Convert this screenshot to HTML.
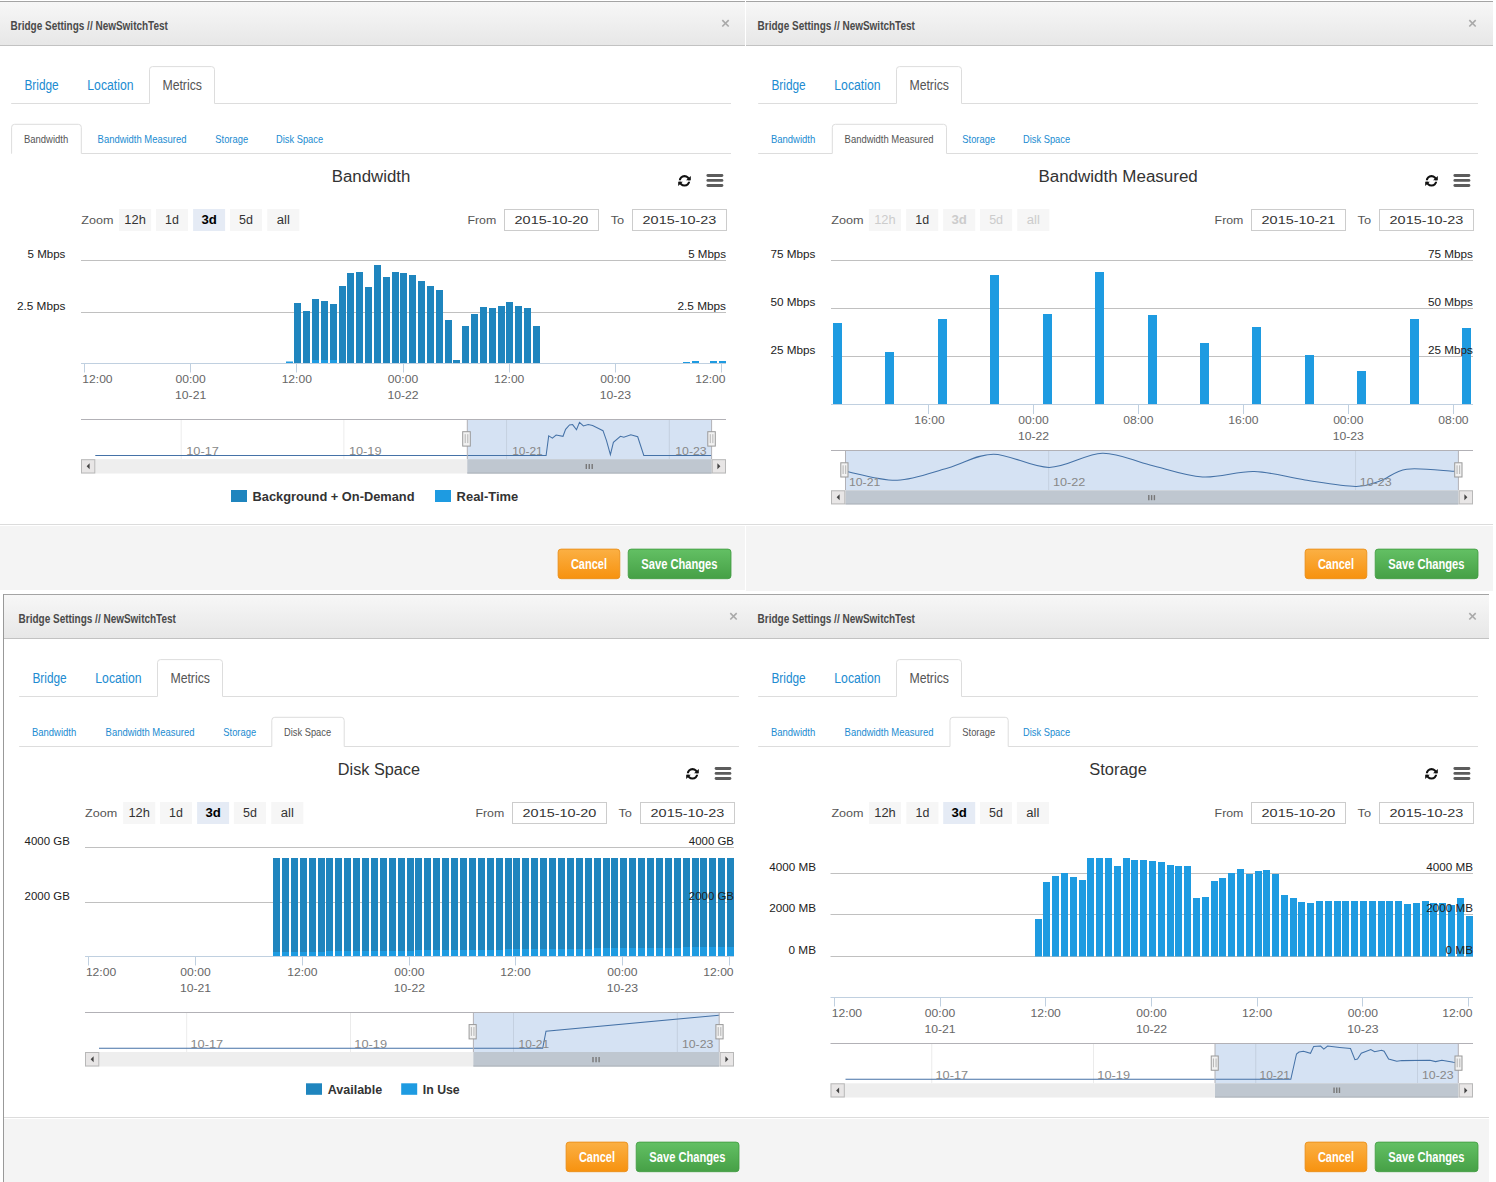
<!DOCTYPE html><html><head><meta charset="utf-8"><style>html,body{margin:0;padding:0;background:#fff;overflow:hidden}svg{display:block}text{font-family:"Liberation Sans",sans-serif}</style></head><body>
<svg width="1496" height="1182" viewBox="0 0 1496 1182">
<defs>
<linearGradient id="hdr" x1="0" y1="0" x2="0" y2="1"><stop offset="0" stop-color="#f7f7f7"/><stop offset="1" stop-color="#e7e7e7"/></linearGradient>
<linearGradient id="orng" x1="0" y1="0" x2="0" y2="1"><stop offset="0" stop-color="#fbb044"/><stop offset="1" stop-color="#f7920f"/></linearGradient>
<linearGradient id="grn" x1="0" y1="0" x2="0" y2="1"><stop offset="0" stop-color="#63c064"/><stop offset="1" stop-color="#46a046"/></linearGradient>
</defs>
<rect x="0.00" y="0.00" width="1496.00" height="1182.00" fill="#ffffff"/>
<g transform="translate(0,0)">
<rect x="0.00" y="1.00" width="745.00" height="589.00" fill="#ffffff"/>
<rect x="0.00" y="1.50" width="745.00" height="44.00" fill="url(#hdr)"/>
<line x1="0.00" y1="1.50" x2="745.00" y2="1.50" stroke="#a4a4a4" stroke-width="1"/>
<line x1="0.00" y1="45.50" x2="745.00" y2="45.50" stroke="#c2c2c2" stroke-width="1"/>
<text x="10.6" y="29.8" font-size="12" fill="#4a4a4a" font-weight="bold" textLength="157.3" lengthAdjust="spacingAndGlyphs">Bridge Settings // NewSwitchTest</text>
<path d="M722.3,20.1 L728.7,26.5 M728.7,20.1 L722.3,26.5" stroke="#a9a9a9" stroke-width="1.6"/>
<path d="M11.2,103.5 H149.5 M214.5,103.5 H731" stroke="#dddddd" stroke-width="1"/>
<path d="M149.5,103.5 V69.6 Q149.5,66.6 152.5,66.6 H211.5 Q214.5,66.6 214.5,69.6 V103.5" fill="#fff" stroke="#dddddd" stroke-width="1"/>
<text x="24.4" y="89.7" font-size="14" fill="#218bd1" textLength="34.3" lengthAdjust="spacingAndGlyphs">Bridge</text>
<text x="87.3" y="89.7" font-size="14" fill="#218bd1" textLength="46.2" lengthAdjust="spacingAndGlyphs">Location</text>
<text x="162.4" y="89.7" font-size="14" fill="#555555" textLength="39.6" lengthAdjust="spacingAndGlyphs">Metrics</text>
<path d="M11.2,153.5 H11.6 M81.3,153.5 H731" stroke="#dddddd" stroke-width="1"/>
<path d="M11.6,153.5 V127.3 Q11.6,124.3 14.6,124.3 H78.3 Q81.3,124.3 81.3,127.3 V153.5" fill="#fff" stroke="#dddddd" stroke-width="1"/>
<text x="23.9" y="142.7" font-size="11" fill="#555555" textLength="44.3" lengthAdjust="spacingAndGlyphs">Bandwidth</text>
<text x="97.6" y="142.7" font-size="11" fill="#218bd1" textLength="88.8" lengthAdjust="spacingAndGlyphs">Bandwidth Measured</text>
<text x="215.3" y="142.7" font-size="11" fill="#218bd1" textLength="32.8" lengthAdjust="spacingAndGlyphs">Storage</text>
<text x="276.1" y="142.7" font-size="11" fill="#218bd1" textLength="47.0" lengthAdjust="spacingAndGlyphs">Disk Space</text>
<line x1="0.00" y1="524.50" x2="745.00" y2="524.50" stroke="#dcdcdc" stroke-width="1"/>
<rect x="0.00" y="526.00" width="745.00" height="64.00" fill="#f4f4f4"/>
<rect x="558.10" y="549.10" width="61.70" height="29.60" fill="url(#orng)" stroke="#e88a12" stroke-width="0.8" rx="3"/>
<text x="570.9" y="568.7" font-size="14.5" fill="#ffffff" font-weight="bold" textLength="36.1" lengthAdjust="spacingAndGlyphs">Cancel</text>
<rect x="628.20" y="549.10" width="102.80" height="29.60" fill="url(#grn)" stroke="#3f9a3f" stroke-width="0.8" rx="3"/>
<text x="641.3" y="568.7" font-size="14.5" fill="#ffffff" font-weight="bold" textLength="76.2" lengthAdjust="spacingAndGlyphs">Save Changes</text>
</g>
<g transform="translate(747,0)">
<rect x="-1.00" y="1.00" width="747.00" height="590.00" fill="#ffffff"/>
<rect x="-1.00" y="1.50" width="747.00" height="44.00" fill="url(#hdr)"/>
<line x1="-1.00" y1="1.50" x2="746.00" y2="1.50" stroke="#a4a4a4" stroke-width="1"/>
<line x1="-1.00" y1="45.50" x2="746.00" y2="45.50" stroke="#c2c2c2" stroke-width="1"/>
<text x="10.6" y="29.8" font-size="12" fill="#4a4a4a" font-weight="bold" textLength="157.3" lengthAdjust="spacingAndGlyphs">Bridge Settings // NewSwitchTest</text>
<path d="M722.3,20.1 L728.7,26.5 M728.7,20.1 L722.3,26.5" stroke="#a9a9a9" stroke-width="1.6"/>
<path d="M11.2,103.5 H149.5 M214.5,103.5 H731" stroke="#dddddd" stroke-width="1"/>
<path d="M149.5,103.5 V69.6 Q149.5,66.6 152.5,66.6 H211.5 Q214.5,66.6 214.5,69.6 V103.5" fill="#fff" stroke="#dddddd" stroke-width="1"/>
<text x="24.4" y="89.7" font-size="14" fill="#218bd1" textLength="34.3" lengthAdjust="spacingAndGlyphs">Bridge</text>
<text x="87.3" y="89.7" font-size="14" fill="#218bd1" textLength="46.2" lengthAdjust="spacingAndGlyphs">Location</text>
<text x="162.4" y="89.7" font-size="14" fill="#555555" textLength="39.6" lengthAdjust="spacingAndGlyphs">Metrics</text>
<path d="M11.2,153.5 H85.3 M199.5,153.5 H731" stroke="#dddddd" stroke-width="1"/>
<path d="M85.3,153.5 V127.3 Q85.3,124.3 88.3,124.3 H196.5 Q199.5,124.3 199.5,127.3 V153.5" fill="#fff" stroke="#dddddd" stroke-width="1"/>
<text x="23.9" y="142.7" font-size="11" fill="#218bd1" textLength="44.3" lengthAdjust="spacingAndGlyphs">Bandwidth</text>
<text x="97.6" y="142.7" font-size="11" fill="#555555" textLength="88.8" lengthAdjust="spacingAndGlyphs">Bandwidth Measured</text>
<text x="215.3" y="142.7" font-size="11" fill="#218bd1" textLength="32.8" lengthAdjust="spacingAndGlyphs">Storage</text>
<text x="276.1" y="142.7" font-size="11" fill="#218bd1" textLength="47.0" lengthAdjust="spacingAndGlyphs">Disk Space</text>
<line x1="-1.00" y1="524.50" x2="746.00" y2="524.50" stroke="#dcdcdc" stroke-width="1"/>
<rect x="-1.00" y="526.00" width="747.00" height="65.00" fill="#f4f4f4"/>
<rect x="558.10" y="549.10" width="61.70" height="29.60" fill="url(#orng)" stroke="#e88a12" stroke-width="0.8" rx="3"/>
<text x="570.9" y="568.7" font-size="14.5" fill="#ffffff" font-weight="bold" textLength="36.1" lengthAdjust="spacingAndGlyphs">Cancel</text>
<rect x="628.20" y="549.10" width="102.80" height="29.60" fill="url(#grn)" stroke="#3f9a3f" stroke-width="0.8" rx="3"/>
<text x="641.3" y="568.7" font-size="14.5" fill="#ffffff" font-weight="bold" textLength="76.2" lengthAdjust="spacingAndGlyphs">Save Changes</text>
</g>
<g transform="translate(8,593)">
<rect x="-4.00" y="1.00" width="742.00" height="588.00" fill="#ffffff"/>
<rect x="-4.00" y="1.50" width="742.00" height="44.00" fill="url(#hdr)"/>
<line x1="-4.00" y1="1.50" x2="738.00" y2="1.50" stroke="#a4a4a4" stroke-width="1"/>
<line x1="-4.00" y1="45.50" x2="738.00" y2="45.50" stroke="#c2c2c2" stroke-width="1"/>
<text x="10.6" y="29.8" font-size="12" fill="#4a4a4a" font-weight="bold" textLength="157.3" lengthAdjust="spacingAndGlyphs">Bridge Settings // NewSwitchTest</text>
<path d="M722.3,20.1 L728.7,26.5 M728.7,20.1 L722.3,26.5" stroke="#a9a9a9" stroke-width="1.6"/>
<path d="M11.2,103.5 H149.5 M214.5,103.5 H731" stroke="#dddddd" stroke-width="1"/>
<path d="M149.5,103.5 V69.6 Q149.5,66.6 152.5,66.6 H211.5 Q214.5,66.6 214.5,69.6 V103.5" fill="#fff" stroke="#dddddd" stroke-width="1"/>
<text x="24.4" y="89.7" font-size="14" fill="#218bd1" textLength="34.3" lengthAdjust="spacingAndGlyphs">Bridge</text>
<text x="87.3" y="89.7" font-size="14" fill="#218bd1" textLength="46.2" lengthAdjust="spacingAndGlyphs">Location</text>
<text x="162.4" y="89.7" font-size="14" fill="#555555" textLength="39.6" lengthAdjust="spacingAndGlyphs">Metrics</text>
<path d="M11.2,153.5 H263.8 M336.2,153.5 H731" stroke="#dddddd" stroke-width="1"/>
<path d="M263.8,153.5 V127.3 Q263.8,124.3 266.8,124.3 H333.2 Q336.2,124.3 336.2,127.3 V153.5" fill="#fff" stroke="#dddddd" stroke-width="1"/>
<text x="23.9" y="142.7" font-size="11" fill="#218bd1" textLength="44.3" lengthAdjust="spacingAndGlyphs">Bandwidth</text>
<text x="97.6" y="142.7" font-size="11" fill="#218bd1" textLength="88.8" lengthAdjust="spacingAndGlyphs">Bandwidth Measured</text>
<text x="215.3" y="142.7" font-size="11" fill="#218bd1" textLength="32.8" lengthAdjust="spacingAndGlyphs">Storage</text>
<text x="276.1" y="142.7" font-size="11" fill="#555555" textLength="47.0" lengthAdjust="spacingAndGlyphs">Disk Space</text>
<line x1="-4.00" y1="524.50" x2="738.00" y2="524.50" stroke="#dcdcdc" stroke-width="1"/>
<rect x="-4.00" y="526.00" width="742.00" height="63.00" fill="#f4f4f4"/>
<rect x="558.10" y="549.10" width="61.70" height="29.60" fill="url(#orng)" stroke="#e88a12" stroke-width="0.8" rx="3"/>
<text x="570.9" y="568.7" font-size="14.5" fill="#ffffff" font-weight="bold" textLength="36.1" lengthAdjust="spacingAndGlyphs">Cancel</text>
<rect x="628.20" y="549.10" width="102.80" height="29.60" fill="url(#grn)" stroke="#3f9a3f" stroke-width="0.8" rx="3"/>
<text x="641.3" y="568.7" font-size="14.5" fill="#ffffff" font-weight="bold" textLength="76.2" lengthAdjust="spacingAndGlyphs">Save Changes</text>
</g>
<line x1="3.50" y1="594.00" x2="3.50" y2="1182.00" stroke="#999999" stroke-width="1"/>
<g transform="translate(747,593)">
<rect x="-1.00" y="1.00" width="743.00" height="588.00" fill="#ffffff"/>
<rect x="-1.00" y="1.50" width="743.00" height="44.00" fill="url(#hdr)"/>
<line x1="-1.00" y1="1.50" x2="742.00" y2="1.50" stroke="#a4a4a4" stroke-width="1"/>
<line x1="-1.00" y1="45.50" x2="742.00" y2="45.50" stroke="#c2c2c2" stroke-width="1"/>
<text x="10.6" y="29.8" font-size="12" fill="#4a4a4a" font-weight="bold" textLength="157.3" lengthAdjust="spacingAndGlyphs">Bridge Settings // NewSwitchTest</text>
<path d="M722.3,20.1 L728.7,26.5 M728.7,20.1 L722.3,26.5" stroke="#a9a9a9" stroke-width="1.6"/>
<path d="M11.2,103.5 H149.5 M214.5,103.5 H731" stroke="#dddddd" stroke-width="1"/>
<path d="M149.5,103.5 V69.6 Q149.5,66.6 152.5,66.6 H211.5 Q214.5,66.6 214.5,69.6 V103.5" fill="#fff" stroke="#dddddd" stroke-width="1"/>
<text x="24.4" y="89.7" font-size="14" fill="#218bd1" textLength="34.3" lengthAdjust="spacingAndGlyphs">Bridge</text>
<text x="87.3" y="89.7" font-size="14" fill="#218bd1" textLength="46.2" lengthAdjust="spacingAndGlyphs">Location</text>
<text x="162.4" y="89.7" font-size="14" fill="#555555" textLength="39.6" lengthAdjust="spacingAndGlyphs">Metrics</text>
<path d="M11.2,153.5 H203.0 M261.2,153.5 H731" stroke="#dddddd" stroke-width="1"/>
<path d="M203.0,153.5 V127.3 Q203.0,124.3 206.0,124.3 H258.2 Q261.2,124.3 261.2,127.3 V153.5" fill="#fff" stroke="#dddddd" stroke-width="1"/>
<text x="23.9" y="142.7" font-size="11" fill="#218bd1" textLength="44.3" lengthAdjust="spacingAndGlyphs">Bandwidth</text>
<text x="97.6" y="142.7" font-size="11" fill="#218bd1" textLength="88.8" lengthAdjust="spacingAndGlyphs">Bandwidth Measured</text>
<text x="215.3" y="142.7" font-size="11" fill="#555555" textLength="32.8" lengthAdjust="spacingAndGlyphs">Storage</text>
<text x="276.1" y="142.7" font-size="11" fill="#218bd1" textLength="47.0" lengthAdjust="spacingAndGlyphs">Disk Space</text>
<line x1="-1.00" y1="524.50" x2="742.00" y2="524.50" stroke="#dcdcdc" stroke-width="1"/>
<rect x="-1.00" y="526.00" width="743.00" height="63.00" fill="#f4f4f4"/>
<rect x="558.10" y="549.10" width="61.70" height="29.60" fill="url(#orng)" stroke="#e88a12" stroke-width="0.8" rx="3"/>
<text x="570.9" y="568.7" font-size="14.5" fill="#ffffff" font-weight="bold" textLength="36.1" lengthAdjust="spacingAndGlyphs">Cancel</text>
<rect x="628.20" y="549.10" width="102.80" height="29.60" fill="url(#grn)" stroke="#3f9a3f" stroke-width="0.8" rx="3"/>
<text x="641.3" y="568.7" font-size="14.5" fill="#ffffff" font-weight="bold" textLength="76.2" lengthAdjust="spacingAndGlyphs">Save Changes</text>
</g>
<line x1="0.00" y1="524.50" x2="1493.00" y2="524.50" stroke="#dcdcdc" stroke-width="1"/>
<text x="371.0" y="181.7" font-size="16" fill="#333333" text-anchor="middle" textLength="78.5" lengthAdjust="spacingAndGlyphs">Bandwidth</text>
<clipPath id="rt1"><rect x="676.5" y="172.85" width="16" height="7.35"/></clipPath>
<clipPath id="rb1"><rect x="676.5" y="181.70" width="16" height="8"/></clipPath>
<path d="M678.75,180.85 A5.75,5.75 0 1 1 690.25,180.85 A5.75,5.75 0 1 1 678.75,180.85 Z M680.95,180.85 A3.55,3.55 0 1 0 688.05,180.85 A3.55,3.55 0 1 0 680.95,180.85 Z" fill="#111" fill-rule="evenodd" clip-path="url(#rt1)"/>
<path d="M678.75,180.85 A5.75,5.75 0 1 1 690.25,180.85 A5.75,5.75 0 1 1 678.75,180.85 Z M680.95,180.85 A3.55,3.55 0 1 0 688.05,180.85 A3.55,3.55 0 1 0 680.95,180.85 Z" fill="#111" fill-rule="evenodd" clip-path="url(#rb1)"/>
<path d="M690.80,176.00 L690.80,180.20 L686.00,180.20 Z" fill="#111"/>
<path d="M678.20,185.90 L678.20,181.70 L682.80,181.70 Z" fill="#111"/>
<line x1="707.90" y1="175.50" x2="721.90" y2="175.50" stroke="#5c5c5c" stroke-width="2.9" stroke-linecap="round"/>
<line x1="707.90" y1="180.40" x2="721.90" y2="180.40" stroke="#5c5c5c" stroke-width="2.9" stroke-linecap="round"/>
<line x1="707.90" y1="185.50" x2="721.90" y2="185.50" stroke="#5c5c5c" stroke-width="2.9" stroke-linecap="round"/>
<text x="81.2" y="223.8" font-size="11.5" fill="#555555" textLength="32.2" lengthAdjust="spacingAndGlyphs">Zoom</text>
<rect x="119.10" y="209.00" width="32.00" height="22.00" fill="#f6f6f6"/>
<text x="135.1" y="223.8" font-size="12" fill="#333333" text-anchor="middle" textLength="21.5" lengthAdjust="spacingAndGlyphs">12h</text>
<rect x="156.00" y="209.00" width="32.00" height="22.00" fill="#f6f6f6"/>
<text x="172.0" y="223.8" font-size="12" fill="#333333" text-anchor="middle" textLength="13.8" lengthAdjust="spacingAndGlyphs">1d</text>
<rect x="193.10" y="209.00" width="32.00" height="22.00" fill="#e5ebf5"/>
<text x="209.1" y="223.8" font-size="12" fill="#000000" font-weight="bold" text-anchor="middle" textLength="15.4" lengthAdjust="spacingAndGlyphs">3d</text>
<rect x="230.00" y="209.00" width="32.00" height="22.00" fill="#f6f6f6"/>
<text x="246.0" y="223.8" font-size="12" fill="#333333" text-anchor="middle" textLength="13.9" lengthAdjust="spacingAndGlyphs">5d</text>
<rect x="267.30" y="209.00" width="32.00" height="22.00" fill="#f6f6f6"/>
<text x="283.3" y="223.8" font-size="12" fill="#333333" text-anchor="middle" textLength="13.1" lengthAdjust="spacingAndGlyphs">all</text>
<text x="467.4" y="223.8" font-size="11" fill="#555555" textLength="28.8" lengthAdjust="spacingAndGlyphs">From</text>
<rect x="504.50" y="209.50" width="94.00" height="21.00" fill="#ffffff" stroke="#cccccc" stroke-width="1"/>
<text x="551.5" y="223.8" font-size="11.3" fill="#333333" text-anchor="middle" textLength="73.8" lengthAdjust="spacingAndGlyphs">2015-10-20</text>
<text x="610.7" y="223.8" font-size="11" fill="#555555" textLength="13.5" lengthAdjust="spacingAndGlyphs">To</text>
<rect x="632.50" y="209.50" width="94.00" height="21.00" fill="#ffffff" stroke="#cccccc" stroke-width="1"/>
<text x="679.5" y="223.8" font-size="11.3" fill="#333333" text-anchor="middle" textLength="73.8" lengthAdjust="spacingAndGlyphs">2015-10-23</text>
<line x1="81.00" y1="260.50" x2="726.00" y2="260.50" stroke="#c0c0c0" stroke-width="1"/>
<line x1="81.00" y1="312.50" x2="726.00" y2="312.50" stroke="#c0c0c0" stroke-width="1"/>
<text x="65.4" y="257.9" font-size="11" fill="#222222" text-anchor="end" textLength="37.8" lengthAdjust="spacingAndGlyphs">5 Mbps</text>
<text x="65.4" y="309.5" font-size="11" fill="#222222" text-anchor="end" textLength="48.5" lengthAdjust="spacingAndGlyphs">2.5 Mbps</text>
<rect x="294.00" y="303.00" width="7.00" height="60.00" fill="#1f85be"/>
<rect x="303.00" y="311.00" width="7.00" height="52.00" fill="#1f85be"/>
<rect x="312.00" y="299.00" width="7.00" height="64.00" fill="#1f85be"/>
<rect x="321.00" y="301.00" width="7.00" height="62.00" fill="#1f85be"/>
<rect x="330.00" y="304.00" width="7.00" height="59.00" fill="#1f85be"/>
<rect x="339.00" y="286.00" width="7.00" height="77.00" fill="#1f85be"/>
<rect x="347.00" y="273.00" width="7.00" height="90.00" fill="#1f85be"/>
<rect x="356.00" y="272.00" width="7.00" height="91.00" fill="#1f85be"/>
<rect x="365.00" y="287.00" width="7.00" height="76.00" fill="#1f85be"/>
<rect x="374.00" y="265.00" width="7.00" height="98.00" fill="#1f85be"/>
<rect x="383.00" y="277.00" width="7.00" height="86.00" fill="#1f85be"/>
<rect x="392.00" y="272.00" width="7.00" height="91.00" fill="#1f85be"/>
<rect x="400.00" y="273.00" width="7.00" height="90.00" fill="#1f85be"/>
<rect x="409.00" y="275.00" width="7.00" height="88.00" fill="#1f85be"/>
<rect x="418.00" y="281.00" width="7.00" height="82.00" fill="#1f85be"/>
<rect x="427.00" y="286.00" width="7.00" height="77.00" fill="#1f85be"/>
<rect x="436.00" y="290.00" width="7.00" height="73.00" fill="#1f85be"/>
<rect x="445.00" y="320.00" width="7.00" height="43.00" fill="#1f85be"/>
<rect x="453.00" y="360.00" width="7.00" height="3.00" fill="#1f85be"/>
<rect x="462.00" y="326.00" width="7.00" height="37.00" fill="#1f85be"/>
<rect x="471.00" y="314.00" width="7.00" height="49.00" fill="#1f85be"/>
<rect x="480.00" y="307.00" width="7.00" height="56.00" fill="#1f85be"/>
<rect x="489.00" y="308.00" width="7.00" height="55.00" fill="#1f85be"/>
<rect x="498.00" y="306.00" width="7.00" height="57.00" fill="#1f85be"/>
<rect x="506.00" y="302.00" width="7.00" height="61.00" fill="#1f85be"/>
<rect x="515.00" y="306.00" width="7.00" height="57.00" fill="#1f85be"/>
<rect x="524.00" y="308.00" width="7.00" height="55.00" fill="#1f85be"/>
<rect x="533.00" y="326.00" width="7.00" height="37.00" fill="#1f85be"/>
<rect x="312.00" y="360.00" width="7.00" height="3.00" fill="#1e9be1"/>
<rect x="321.00" y="360.00" width="7.00" height="3.00" fill="#1e9be1"/>
<rect x="330.00" y="360.00" width="7.00" height="3.00" fill="#1e9be1"/>
<rect x="286.00" y="361.50" width="7.00" height="1.50" fill="#1e9be1"/>
<rect x="683.00" y="362.00" width="7.00" height="1.00" fill="#1e9be1"/>
<rect x="692.00" y="361.00" width="7.00" height="2.00" fill="#1e9be1"/>
<rect x="710.00" y="361.00" width="7.00" height="2.00" fill="#1e9be1"/>
<rect x="719.00" y="361.00" width="7.00" height="2.00" fill="#1e9be1"/>
<text x="726.0" y="257.9" font-size="11" fill="#222222" text-anchor="end" textLength="37.8" lengthAdjust="spacingAndGlyphs">5 Mbps</text>
<text x="726.0" y="309.5" font-size="11" fill="#222222" text-anchor="end" textLength="48.5" lengthAdjust="spacingAndGlyphs">2.5 Mbps</text>
<line x1="81.00" y1="363.50" x2="726.00" y2="363.50" stroke="#c0d0e0" stroke-width="1"/>
<line x1="84.50" y1="363.50" x2="84.50" y2="372.50" stroke="#c0d0e0" stroke-width="1"/>
<line x1="190.50" y1="363.50" x2="190.50" y2="372.50" stroke="#c0d0e0" stroke-width="1"/>
<line x1="296.50" y1="363.50" x2="296.50" y2="372.50" stroke="#c0d0e0" stroke-width="1"/>
<line x1="403.50" y1="363.50" x2="403.50" y2="372.50" stroke="#c0d0e0" stroke-width="1"/>
<line x1="509.50" y1="363.50" x2="509.50" y2="372.50" stroke="#c0d0e0" stroke-width="1"/>
<line x1="615.50" y1="363.50" x2="615.50" y2="372.50" stroke="#c0d0e0" stroke-width="1"/>
<line x1="721.50" y1="363.50" x2="721.50" y2="372.50" stroke="#c0d0e0" stroke-width="1"/>
<text x="82.3" y="382.6" font-size="11" fill="#666666" textLength="30.3" lengthAdjust="spacingAndGlyphs">12:00</text>
<text x="190.6" y="382.6" font-size="11" fill="#666666" text-anchor="middle" textLength="30.3" lengthAdjust="spacingAndGlyphs">00:00</text>
<text x="190.6" y="398.7" font-size="11" fill="#666666" text-anchor="middle" textLength="31.2" lengthAdjust="spacingAndGlyphs">10-21</text>
<text x="296.8" y="382.6" font-size="11" fill="#666666" text-anchor="middle" textLength="30.3" lengthAdjust="spacingAndGlyphs">12:00</text>
<text x="403.0" y="382.6" font-size="11" fill="#666666" text-anchor="middle" textLength="30.3" lengthAdjust="spacingAndGlyphs">00:00</text>
<text x="403.0" y="398.7" font-size="11" fill="#666666" text-anchor="middle" textLength="31.2" lengthAdjust="spacingAndGlyphs">10-22</text>
<text x="509.2" y="382.6" font-size="11" fill="#666666" text-anchor="middle" textLength="30.3" lengthAdjust="spacingAndGlyphs">12:00</text>
<text x="615.4" y="382.6" font-size="11" fill="#666666" text-anchor="middle" textLength="30.3" lengthAdjust="spacingAndGlyphs">00:00</text>
<text x="615.4" y="398.7" font-size="11" fill="#666666" text-anchor="middle" textLength="31.2" lengthAdjust="spacingAndGlyphs">10-23</text>
<text x="725.5" y="382.6" font-size="11" fill="#666666" text-anchor="end" textLength="30.3" lengthAdjust="spacingAndGlyphs">12:00</text>
<rect x="467.30" y="419.50" width="244.30" height="39.70" fill="#d5e2f3"/>
<line x1="181.20" y1="419.50" x2="181.20" y2="459.20" stroke="#000" stroke-opacity="0.08" stroke-width="1"/>
<line x1="343.90" y1="419.50" x2="343.90" y2="459.20" stroke="#000" stroke-opacity="0.08" stroke-width="1"/>
<line x1="506.60" y1="419.50" x2="506.60" y2="459.20" stroke="#000" stroke-opacity="0.08" stroke-width="1"/>
<line x1="669.30" y1="419.50" x2="669.30" y2="459.20" stroke="#000" stroke-opacity="0.08" stroke-width="1"/>
<path d="M95.30,455.50 L546.10,455.50 L548.70,435.90 L552.40,438.10 L556.10,435.00 L563.00,436.30 L565.60,429.40 L569.50,425.00 L572.60,424.60 L576.50,429.80 L579.50,422.40 L583.40,425.90 L588.20,424.60 L592.60,425.50 L598.60,428.50 L603.00,430.70 L606.50,440.70 L610.40,454.60 L613.40,442.40 L620.40,436.30 L623.80,437.20 L630.80,434.80 L637.70,436.80 L643.80,455.50 L711.50,455.50" fill="none" stroke="#4572a7" stroke-width="1.05"/>
<text x="186.2" y="454.9" font-size="11" fill="#888888" textLength="32.7" lengthAdjust="spacingAndGlyphs">10-17</text>
<text x="348.9" y="454.9" font-size="11" fill="#888888" textLength="32.7" lengthAdjust="spacingAndGlyphs">10-19</text>
<text x="512.2" y="454.9" font-size="11" fill="#888888" textLength="30.5" lengthAdjust="spacingAndGlyphs">10-21</text>
<text x="675.2" y="454.9" font-size="11" fill="#888888" textLength="31.5" lengthAdjust="spacingAndGlyphs">10-23</text>
<path d="M81.00,419.50 H726.00 M467.30,419.50 V459.20 M711.60,419.50 V459.20" stroke="#b2b1b6" stroke-width="1" fill="none"/>
<rect x="81.00" y="459.20" width="645.00" height="14.30" fill="#eeeeee"/>
<rect x="467.30" y="459.20" width="244.30" height="14.30" fill="#bfc7d0"/>
<line x1="467.30" y1="473.00" x2="711.60" y2="473.00" stroke="#adb3ba" stroke-width="1"/>
<rect x="81.50" y="459.70" width="13.30" height="13.30" fill="#e8e6e6" stroke="#b8b8b8" stroke-width="1"/>
<rect x="712.20" y="459.70" width="13.30" height="13.30" fill="#e8e6e6" stroke="#b8b8b8" stroke-width="1"/>
<path d="M86.60,466.35 L89.60,463.35 V469.35 Z" fill="#444"/>
<path d="M720.40,466.35 L717.40,463.35 V469.35 Z" fill="#444"/>
<line x1="586.30" y1="464.00" x2="586.30" y2="469.00" stroke="#777" stroke-width="1.4"/>
<line x1="589.25" y1="464.00" x2="589.25" y2="469.00" stroke="#777" stroke-width="1.4"/>
<line x1="592.20" y1="464.00" x2="592.20" y2="469.00" stroke="#777" stroke-width="1.4"/>
<rect x="462.70" y="431.70" width="7.60" height="14.40" fill="#f2f2f2" stroke="#999999" stroke-width="1"/>
<path d="M465.20,434.20 V443.10 M467.80,434.20 V443.10" stroke="#999" stroke-width="0.7"/>
<rect x="707.80" y="431.70" width="7.50" height="14.40" fill="#f2f2f2" stroke="#999999" stroke-width="1"/>
<path d="M710.25,434.20 V443.10 M712.85,434.20 V443.10" stroke="#999" stroke-width="0.7"/>
<rect x="231.00" y="490.00" width="16.00" height="12.00" fill="#1f85be"/>
<text x="252.5" y="500.8" font-size="12" fill="#333333" font-weight="bold" textLength="162.0" lengthAdjust="spacingAndGlyphs">Background + On-Demand</text>
<rect x="435.00" y="490.00" width="16.00" height="12.00" fill="#1e9be1"/>
<text x="456.6" y="500.8" font-size="12" fill="#333333" font-weight="bold" textLength="61.6" lengthAdjust="spacingAndGlyphs">Real-Time</text>
<text x="1118.1" y="181.7" font-size="16" fill="#333333" text-anchor="middle" textLength="159.4" lengthAdjust="spacingAndGlyphs">Bandwidth Measured</text>
<clipPath id="rt2"><rect x="1423.5" y="172.85" width="16" height="7.35"/></clipPath>
<clipPath id="rb2"><rect x="1423.5" y="181.70" width="16" height="8"/></clipPath>
<path d="M1425.75,180.85 A5.75,5.75 0 1 1 1437.25,180.85 A5.75,5.75 0 1 1 1425.75,180.85 Z M1427.95,180.85 A3.55,3.55 0 1 0 1435.05,180.85 A3.55,3.55 0 1 0 1427.95,180.85 Z" fill="#111" fill-rule="evenodd" clip-path="url(#rt2)"/>
<path d="M1425.75,180.85 A5.75,5.75 0 1 1 1437.25,180.85 A5.75,5.75 0 1 1 1425.75,180.85 Z M1427.95,180.85 A3.55,3.55 0 1 0 1435.05,180.85 A3.55,3.55 0 1 0 1427.95,180.85 Z" fill="#111" fill-rule="evenodd" clip-path="url(#rb2)"/>
<path d="M1437.80,176.00 L1437.80,180.20 L1433.00,180.20 Z" fill="#111"/>
<path d="M1425.20,185.90 L1425.20,181.70 L1429.80,181.70 Z" fill="#111"/>
<line x1="1454.90" y1="175.50" x2="1468.90" y2="175.50" stroke="#5c5c5c" stroke-width="2.9" stroke-linecap="round"/>
<line x1="1454.90" y1="180.40" x2="1468.90" y2="180.40" stroke="#5c5c5c" stroke-width="2.9" stroke-linecap="round"/>
<line x1="1454.90" y1="185.50" x2="1468.90" y2="185.50" stroke="#5c5c5c" stroke-width="2.9" stroke-linecap="round"/>
<text x="831.2" y="223.8" font-size="11.5" fill="#555555" textLength="32.4" lengthAdjust="spacingAndGlyphs">Zoom</text>
<rect x="868.90" y="209.00" width="32.00" height="22.00" fill="#f6f6f6"/>
<text x="884.9" y="223.8" font-size="12" fill="#cccccc" text-anchor="middle" textLength="21.5" lengthAdjust="spacingAndGlyphs">12h</text>
<rect x="906.20" y="209.00" width="32.00" height="22.00" fill="#f6f6f6"/>
<text x="922.2" y="223.8" font-size="12" fill="#333333" text-anchor="middle" textLength="13.8" lengthAdjust="spacingAndGlyphs">1d</text>
<rect x="943.20" y="209.00" width="32.00" height="22.00" fill="#f6f6f6"/>
<text x="959.2" y="223.8" font-size="12" fill="#cccccc" font-weight="bold" text-anchor="middle" textLength="15.4" lengthAdjust="spacingAndGlyphs">3d</text>
<rect x="980.10" y="209.00" width="32.00" height="22.00" fill="#f6f6f6"/>
<text x="996.1" y="223.8" font-size="12" fill="#cccccc" text-anchor="middle" textLength="13.9" lengthAdjust="spacingAndGlyphs">5d</text>
<rect x="1017.30" y="209.00" width="32.00" height="22.00" fill="#f6f6f6"/>
<text x="1033.3" y="223.8" font-size="12" fill="#cccccc" text-anchor="middle" textLength="13.1" lengthAdjust="spacingAndGlyphs">all</text>
<text x="1214.6" y="223.8" font-size="11" fill="#555555" textLength="28.8" lengthAdjust="spacingAndGlyphs">From</text>
<rect x="1251.50" y="209.50" width="94.00" height="21.00" fill="#ffffff" stroke="#cccccc" stroke-width="1"/>
<text x="1298.5" y="223.8" font-size="11.3" fill="#333333" text-anchor="middle" textLength="73.8" lengthAdjust="spacingAndGlyphs">2015-10-21</text>
<text x="1357.5" y="223.8" font-size="11" fill="#555555" textLength="13.5" lengthAdjust="spacingAndGlyphs">To</text>
<rect x="1379.50" y="209.50" width="94.00" height="21.00" fill="#ffffff" stroke="#cccccc" stroke-width="1"/>
<text x="1426.5" y="223.8" font-size="11.3" fill="#333333" text-anchor="middle" textLength="73.8" lengthAdjust="spacingAndGlyphs">2015-10-23</text>
<line x1="831.00" y1="260.50" x2="1473.00" y2="260.50" stroke="#c0c0c0" stroke-width="1"/>
<line x1="831.00" y1="308.50" x2="1473.00" y2="308.50" stroke="#c0c0c0" stroke-width="1"/>
<line x1="831.00" y1="356.50" x2="1473.00" y2="356.50" stroke="#c0c0c0" stroke-width="1"/>
<text x="815.5" y="258.0" font-size="11" fill="#222222" text-anchor="end" textLength="45.0" lengthAdjust="spacingAndGlyphs">75 Mbps</text>
<text x="815.5" y="305.8" font-size="11" fill="#222222" text-anchor="end" textLength="45.0" lengthAdjust="spacingAndGlyphs">50 Mbps</text>
<text x="815.5" y="353.7" font-size="11" fill="#222222" text-anchor="end" textLength="45.0" lengthAdjust="spacingAndGlyphs">25 Mbps</text>
<rect x="833.00" y="323.00" width="9.00" height="81.00" fill="#1e9be1"/>
<rect x="885.00" y="352.00" width="9.00" height="52.00" fill="#1e9be1"/>
<rect x="938.00" y="319.00" width="9.00" height="85.00" fill="#1e9be1"/>
<rect x="990.00" y="275.00" width="9.00" height="129.00" fill="#1e9be1"/>
<rect x="1043.00" y="314.00" width="9.00" height="90.00" fill="#1e9be1"/>
<rect x="1095.00" y="272.00" width="9.00" height="132.00" fill="#1e9be1"/>
<rect x="1148.00" y="315.00" width="9.00" height="89.00" fill="#1e9be1"/>
<rect x="1200.00" y="343.00" width="9.00" height="61.00" fill="#1e9be1"/>
<rect x="1252.00" y="327.00" width="9.00" height="77.00" fill="#1e9be1"/>
<rect x="1305.00" y="355.00" width="9.00" height="49.00" fill="#1e9be1"/>
<rect x="1357.00" y="371.00" width="9.00" height="33.00" fill="#1e9be1"/>
<rect x="1410.00" y="319.00" width="9.00" height="85.00" fill="#1e9be1"/>
<rect x="1462.00" y="328.00" width="9.00" height="76.00" fill="#1e9be1"/>
<text x="1473.0" y="258.0" font-size="11" fill="#222222" text-anchor="end" textLength="45.0" lengthAdjust="spacingAndGlyphs">75 Mbps</text>
<text x="1473.0" y="305.8" font-size="11" fill="#222222" text-anchor="end" textLength="45.0" lengthAdjust="spacingAndGlyphs">50 Mbps</text>
<text x="1473.0" y="353.7" font-size="11" fill="#222222" text-anchor="end" textLength="45.0" lengthAdjust="spacingAndGlyphs">25 Mbps</text>
<line x1="831.00" y1="404.50" x2="1473.00" y2="404.50" stroke="#c0d0e0" stroke-width="1"/>
<line x1="928.50" y1="404.50" x2="928.50" y2="414.00" stroke="#c0d0e0" stroke-width="1"/>
<line x1="1033.50" y1="404.50" x2="1033.50" y2="414.00" stroke="#c0d0e0" stroke-width="1"/>
<line x1="1138.50" y1="404.50" x2="1138.50" y2="414.00" stroke="#c0d0e0" stroke-width="1"/>
<line x1="1243.50" y1="404.50" x2="1243.50" y2="414.00" stroke="#c0d0e0" stroke-width="1"/>
<line x1="1348.50" y1="404.50" x2="1348.50" y2="414.00" stroke="#c0d0e0" stroke-width="1"/>
<line x1="1453.50" y1="404.50" x2="1453.50" y2="414.00" stroke="#c0d0e0" stroke-width="1"/>
<text x="929.5" y="424.4" font-size="11" fill="#666666" text-anchor="middle" textLength="30.3" lengthAdjust="spacingAndGlyphs">16:00</text>
<text x="1033.5" y="424.4" font-size="11" fill="#666666" text-anchor="middle" textLength="30.3" lengthAdjust="spacingAndGlyphs">00:00</text>
<text x="1033.5" y="440.0" font-size="11" fill="#666666" text-anchor="middle" textLength="31.2" lengthAdjust="spacingAndGlyphs">10-22</text>
<text x="1138.4" y="424.4" font-size="11" fill="#666666" text-anchor="middle" textLength="30.3" lengthAdjust="spacingAndGlyphs">08:00</text>
<text x="1243.4" y="424.4" font-size="11" fill="#666666" text-anchor="middle" textLength="30.3" lengthAdjust="spacingAndGlyphs">16:00</text>
<text x="1348.3" y="424.4" font-size="11" fill="#666666" text-anchor="middle" textLength="30.3" lengthAdjust="spacingAndGlyphs">00:00</text>
<text x="1348.3" y="440.0" font-size="11" fill="#666666" text-anchor="middle" textLength="31.2" lengthAdjust="spacingAndGlyphs">10-23</text>
<text x="1468.6" y="424.4" font-size="11" fill="#666666" text-anchor="end" textLength="30.3" lengthAdjust="spacingAndGlyphs">08:00</text>
<rect x="845.50" y="450.50" width="612.90" height="39.80" fill="#d5e2f3"/>
<line x1="1048.70" y1="450.50" x2="1048.70" y2="490.30" stroke="#000" stroke-opacity="0.08" stroke-width="1"/>
<line x1="1355.60" y1="450.50" x2="1355.60" y2="490.30" stroke="#000" stroke-opacity="0.08" stroke-width="1"/>
<path d="M845.50,471.20 C854.12,472.72 880.12,480.83 897.20,480.30 C914.28,479.77 931.97,472.35 948.00,468.00 C964.03,463.65 976.52,454.30 993.40,454.20 C1010.28,454.10 1031.15,467.57 1049.30,467.40 C1067.45,467.23 1085.52,453.60 1102.30,453.20 C1119.08,452.80 1133.30,461.03 1150.00,465.00 C1166.70,468.97 1185.13,475.92 1202.50,477.00 C1219.87,478.08 1237.12,471.00 1254.20,471.50 C1271.28,472.00 1288.10,477.52 1305.00,480.00 C1321.90,482.48 1343.10,486.23 1355.60,486.40 C1368.10,486.57 1371.48,483.87 1380.00,481.00 C1388.52,478.13 1394.42,470.82 1406.70,469.20 C1418.98,467.58 1445.08,470.92 1453.70,471.30 C1462.32,471.68 1457.62,471.47 1458.40,471.50" fill="none" stroke="#4572a7" stroke-width="1.05"/>
<text x="849.0" y="485.7" font-size="11" fill="#888888" textLength="31.3" lengthAdjust="spacingAndGlyphs">10-21</text>
<text x="1053.0" y="485.7" font-size="11" fill="#888888" textLength="32.4" lengthAdjust="spacingAndGlyphs">10-22</text>
<text x="1359.8" y="485.7" font-size="11" fill="#888888" textLength="31.8" lengthAdjust="spacingAndGlyphs">10-23</text>
<path d="M831.00,450.50 H1473.00 M845.50,450.50 V490.30 M1458.40,450.50 V490.30" stroke="#b2b1b6" stroke-width="1" fill="none"/>
<rect x="831.00" y="490.30" width="642.00" height="14.10" fill="#eeeeee"/>
<rect x="845.50" y="490.30" width="612.90" height="14.10" fill="#bfc7d0"/>
<line x1="845.50" y1="503.90" x2="1458.40" y2="503.90" stroke="#adb3ba" stroke-width="1"/>
<rect x="831.50" y="490.80" width="13.30" height="13.10" fill="#e8e6e6" stroke="#b8b8b8" stroke-width="1"/>
<rect x="1459.20" y="490.80" width="13.30" height="13.10" fill="#e8e6e6" stroke="#b8b8b8" stroke-width="1"/>
<path d="M836.60,497.35 L839.60,494.35 V500.35 Z" fill="#444"/>
<path d="M1467.40,497.35 L1464.40,494.35 V500.35 Z" fill="#444"/>
<line x1="1148.80" y1="495.10" x2="1148.80" y2="500.20" stroke="#777" stroke-width="1.4"/>
<line x1="1151.60" y1="495.10" x2="1151.60" y2="500.20" stroke="#777" stroke-width="1.4"/>
<line x1="1154.40" y1="495.10" x2="1154.40" y2="500.20" stroke="#777" stroke-width="1.4"/>
<rect x="840.80" y="462.80" width="7.20" height="14.20" fill="#f2f2f2" stroke="#999999" stroke-width="1"/>
<path d="M843.10,465.30 V474.00 M845.70,465.30 V474.00" stroke="#999" stroke-width="0.7"/>
<rect x="1454.70" y="462.80" width="7.30" height="14.20" fill="#f2f2f2" stroke="#999999" stroke-width="1"/>
<path d="M1457.05,465.30 V474.00 M1459.65,465.30 V474.00" stroke="#999" stroke-width="0.7"/>
<text x="378.9" y="774.7" font-size="16" fill="#333333" text-anchor="middle" textLength="82.2" lengthAdjust="spacingAndGlyphs">Disk Space</text>
<clipPath id="rt3"><rect x="684.5" y="765.85" width="16" height="7.35"/></clipPath>
<clipPath id="rb3"><rect x="684.5" y="774.70" width="16" height="8"/></clipPath>
<path d="M686.75,773.85 A5.75,5.75 0 1 1 698.25,773.85 A5.75,5.75 0 1 1 686.75,773.85 Z M688.95,773.85 A3.55,3.55 0 1 0 696.05,773.85 A3.55,3.55 0 1 0 688.95,773.85 Z" fill="#111" fill-rule="evenodd" clip-path="url(#rt3)"/>
<path d="M686.75,773.85 A5.75,5.75 0 1 1 698.25,773.85 A5.75,5.75 0 1 1 686.75,773.85 Z M688.95,773.85 A3.55,3.55 0 1 0 696.05,773.85 A3.55,3.55 0 1 0 688.95,773.85 Z" fill="#111" fill-rule="evenodd" clip-path="url(#rb3)"/>
<path d="M698.80,769.00 L698.80,773.20 L694.00,773.20 Z" fill="#111"/>
<path d="M686.20,778.90 L686.20,774.70 L690.80,774.70 Z" fill="#111"/>
<line x1="716.10" y1="768.50" x2="729.90" y2="768.50" stroke="#5c5c5c" stroke-width="2.9" stroke-linecap="round"/>
<line x1="716.10" y1="773.40" x2="729.90" y2="773.40" stroke="#5c5c5c" stroke-width="2.9" stroke-linecap="round"/>
<line x1="716.10" y1="778.50" x2="729.90" y2="778.50" stroke="#5c5c5c" stroke-width="2.9" stroke-linecap="round"/>
<text x="85.1" y="816.8" font-size="11.5" fill="#555555" textLength="32.2" lengthAdjust="spacingAndGlyphs">Zoom</text>
<rect x="123.20" y="802.00" width="32.00" height="22.00" fill="#f6f6f6"/>
<text x="139.2" y="816.8" font-size="12" fill="#333333" text-anchor="middle" textLength="21.5" lengthAdjust="spacingAndGlyphs">12h</text>
<rect x="160.00" y="802.00" width="32.00" height="22.00" fill="#f6f6f6"/>
<text x="176.0" y="816.8" font-size="12" fill="#333333" text-anchor="middle" textLength="13.8" lengthAdjust="spacingAndGlyphs">1d</text>
<rect x="197.10" y="802.00" width="32.00" height="22.00" fill="#e5ebf5"/>
<text x="213.1" y="816.8" font-size="12" fill="#000000" font-weight="bold" text-anchor="middle" textLength="15.4" lengthAdjust="spacingAndGlyphs">3d</text>
<rect x="233.90" y="802.00" width="32.00" height="22.00" fill="#f6f6f6"/>
<text x="249.9" y="816.8" font-size="12" fill="#333333" text-anchor="middle" textLength="13.9" lengthAdjust="spacingAndGlyphs">5d</text>
<rect x="271.30" y="802.00" width="32.00" height="22.00" fill="#f6f6f6"/>
<text x="287.3" y="816.8" font-size="12" fill="#333333" text-anchor="middle" textLength="13.1" lengthAdjust="spacingAndGlyphs">all</text>
<text x="475.4" y="816.8" font-size="11" fill="#555555" textLength="28.8" lengthAdjust="spacingAndGlyphs">From</text>
<rect x="512.50" y="802.50" width="94.00" height="21.00" fill="#ffffff" stroke="#cccccc" stroke-width="1"/>
<text x="559.5" y="816.8" font-size="11.3" fill="#333333" text-anchor="middle" textLength="73.8" lengthAdjust="spacingAndGlyphs">2015-10-20</text>
<text x="618.4" y="816.8" font-size="11" fill="#555555" textLength="13.5" lengthAdjust="spacingAndGlyphs">To</text>
<rect x="640.50" y="802.50" width="94.00" height="21.00" fill="#ffffff" stroke="#cccccc" stroke-width="1"/>
<text x="687.5" y="816.8" font-size="11.3" fill="#333333" text-anchor="middle" textLength="73.8" lengthAdjust="spacingAndGlyphs">2015-10-23</text>
<line x1="85.00" y1="847.50" x2="734.00" y2="847.50" stroke="#c0c0c0" stroke-width="1"/>
<line x1="85.00" y1="902.50" x2="734.00" y2="902.50" stroke="#c0c0c0" stroke-width="1"/>
<text x="69.8" y="844.6" font-size="11" fill="#222222" text-anchor="end" textLength="45.2" lengthAdjust="spacingAndGlyphs">4000 GB</text>
<text x="69.8" y="899.6" font-size="11" fill="#222222" text-anchor="end" textLength="45.2" lengthAdjust="spacingAndGlyphs">2000 GB</text>
<rect x="273.00" y="858.00" width="7.00" height="98.00" fill="#1f85be"/>
<rect x="273.00" y="952.00" width="7.00" height="4.00" fill="#1e9be1"/>
<rect x="282.00" y="858.00" width="7.00" height="98.00" fill="#1f85be"/>
<rect x="282.00" y="952.00" width="7.00" height="4.00" fill="#1e9be1"/>
<rect x="291.00" y="858.00" width="7.00" height="98.00" fill="#1f85be"/>
<rect x="291.00" y="952.00" width="7.00" height="4.00" fill="#1e9be1"/>
<rect x="300.00" y="858.00" width="7.00" height="98.00" fill="#1f85be"/>
<rect x="300.00" y="952.00" width="7.00" height="4.00" fill="#1e9be1"/>
<rect x="309.00" y="858.00" width="7.00" height="98.00" fill="#1f85be"/>
<rect x="309.00" y="952.00" width="7.00" height="4.00" fill="#1e9be1"/>
<rect x="318.00" y="858.00" width="7.00" height="98.00" fill="#1f85be"/>
<rect x="318.00" y="952.00" width="7.00" height="4.00" fill="#1e9be1"/>
<rect x="326.00" y="858.00" width="7.00" height="98.00" fill="#1f85be"/>
<rect x="326.00" y="951.00" width="7.00" height="5.00" fill="#1e9be1"/>
<rect x="335.00" y="858.00" width="7.00" height="98.00" fill="#1f85be"/>
<rect x="335.00" y="951.00" width="7.00" height="5.00" fill="#1e9be1"/>
<rect x="344.00" y="858.00" width="7.00" height="98.00" fill="#1f85be"/>
<rect x="344.00" y="951.00" width="7.00" height="5.00" fill="#1e9be1"/>
<rect x="353.00" y="858.00" width="7.00" height="98.00" fill="#1f85be"/>
<rect x="353.00" y="951.00" width="7.00" height="5.00" fill="#1e9be1"/>
<rect x="362.00" y="858.00" width="7.00" height="98.00" fill="#1f85be"/>
<rect x="362.00" y="951.00" width="7.00" height="5.00" fill="#1e9be1"/>
<rect x="371.00" y="858.00" width="7.00" height="98.00" fill="#1f85be"/>
<rect x="371.00" y="951.00" width="7.00" height="5.00" fill="#1e9be1"/>
<rect x="380.00" y="858.00" width="7.00" height="98.00" fill="#1f85be"/>
<rect x="380.00" y="951.00" width="7.00" height="5.00" fill="#1e9be1"/>
<rect x="389.00" y="858.00" width="7.00" height="98.00" fill="#1f85be"/>
<rect x="389.00" y="951.00" width="7.00" height="5.00" fill="#1e9be1"/>
<rect x="398.00" y="858.00" width="7.00" height="98.00" fill="#1f85be"/>
<rect x="398.00" y="951.00" width="7.00" height="5.00" fill="#1e9be1"/>
<rect x="407.00" y="858.00" width="7.00" height="98.00" fill="#1f85be"/>
<rect x="407.00" y="951.00" width="7.00" height="5.00" fill="#1e9be1"/>
<rect x="415.00" y="858.00" width="7.00" height="98.00" fill="#1f85be"/>
<rect x="415.00" y="950.00" width="7.00" height="6.00" fill="#1e9be1"/>
<rect x="424.00" y="858.00" width="7.00" height="98.00" fill="#1f85be"/>
<rect x="424.00" y="950.00" width="7.00" height="6.00" fill="#1e9be1"/>
<rect x="433.00" y="858.00" width="7.00" height="98.00" fill="#1f85be"/>
<rect x="433.00" y="950.00" width="7.00" height="6.00" fill="#1e9be1"/>
<rect x="442.00" y="858.00" width="7.00" height="98.00" fill="#1f85be"/>
<rect x="442.00" y="950.00" width="7.00" height="6.00" fill="#1e9be1"/>
<rect x="451.00" y="858.00" width="7.00" height="98.00" fill="#1f85be"/>
<rect x="451.00" y="950.00" width="7.00" height="6.00" fill="#1e9be1"/>
<rect x="460.00" y="858.00" width="7.00" height="98.00" fill="#1f85be"/>
<rect x="460.00" y="950.00" width="7.00" height="6.00" fill="#1e9be1"/>
<rect x="469.00" y="858.00" width="7.00" height="98.00" fill="#1f85be"/>
<rect x="469.00" y="950.00" width="7.00" height="6.00" fill="#1e9be1"/>
<rect x="478.00" y="858.00" width="7.00" height="98.00" fill="#1f85be"/>
<rect x="478.00" y="950.00" width="7.00" height="6.00" fill="#1e9be1"/>
<rect x="487.00" y="858.00" width="7.00" height="98.00" fill="#1f85be"/>
<rect x="487.00" y="950.00" width="7.00" height="6.00" fill="#1e9be1"/>
<rect x="496.00" y="858.00" width="7.00" height="98.00" fill="#1f85be"/>
<rect x="496.00" y="950.00" width="7.00" height="6.00" fill="#1e9be1"/>
<rect x="505.00" y="858.00" width="7.00" height="98.00" fill="#1f85be"/>
<rect x="505.00" y="949.00" width="7.00" height="7.00" fill="#1e9be1"/>
<rect x="513.00" y="858.00" width="7.00" height="98.00" fill="#1f85be"/>
<rect x="513.00" y="949.00" width="7.00" height="7.00" fill="#1e9be1"/>
<rect x="522.00" y="858.00" width="7.00" height="98.00" fill="#1f85be"/>
<rect x="522.00" y="949.00" width="7.00" height="7.00" fill="#1e9be1"/>
<rect x="531.00" y="858.00" width="7.00" height="98.00" fill="#1f85be"/>
<rect x="531.00" y="949.00" width="7.00" height="7.00" fill="#1e9be1"/>
<rect x="540.00" y="858.00" width="7.00" height="98.00" fill="#1f85be"/>
<rect x="540.00" y="949.00" width="7.00" height="7.00" fill="#1e9be1"/>
<rect x="549.00" y="858.00" width="7.00" height="98.00" fill="#1f85be"/>
<rect x="549.00" y="949.00" width="7.00" height="7.00" fill="#1e9be1"/>
<rect x="558.00" y="858.00" width="7.00" height="98.00" fill="#1f85be"/>
<rect x="558.00" y="949.00" width="7.00" height="7.00" fill="#1e9be1"/>
<rect x="567.00" y="858.00" width="7.00" height="98.00" fill="#1f85be"/>
<rect x="567.00" y="949.00" width="7.00" height="7.00" fill="#1e9be1"/>
<rect x="576.00" y="858.00" width="7.00" height="98.00" fill="#1f85be"/>
<rect x="576.00" y="949.00" width="7.00" height="7.00" fill="#1e9be1"/>
<rect x="585.00" y="858.00" width="7.00" height="98.00" fill="#1f85be"/>
<rect x="585.00" y="949.00" width="7.00" height="7.00" fill="#1e9be1"/>
<rect x="594.00" y="858.00" width="7.00" height="98.00" fill="#1f85be"/>
<rect x="594.00" y="948.00" width="7.00" height="8.00" fill="#1e9be1"/>
<rect x="603.00" y="858.00" width="7.00" height="98.00" fill="#1f85be"/>
<rect x="603.00" y="948.00" width="7.00" height="8.00" fill="#1e9be1"/>
<rect x="611.00" y="858.00" width="7.00" height="98.00" fill="#1f85be"/>
<rect x="611.00" y="948.00" width="7.00" height="8.00" fill="#1e9be1"/>
<rect x="620.00" y="858.00" width="7.00" height="98.00" fill="#1f85be"/>
<rect x="620.00" y="948.00" width="7.00" height="8.00" fill="#1e9be1"/>
<rect x="629.00" y="858.00" width="7.00" height="98.00" fill="#1f85be"/>
<rect x="629.00" y="948.00" width="7.00" height="8.00" fill="#1e9be1"/>
<rect x="638.00" y="858.00" width="7.00" height="98.00" fill="#1f85be"/>
<rect x="638.00" y="948.00" width="7.00" height="8.00" fill="#1e9be1"/>
<rect x="647.00" y="858.00" width="7.00" height="98.00" fill="#1f85be"/>
<rect x="647.00" y="948.00" width="7.00" height="8.00" fill="#1e9be1"/>
<rect x="656.00" y="858.00" width="7.00" height="98.00" fill="#1f85be"/>
<rect x="656.00" y="948.00" width="7.00" height="8.00" fill="#1e9be1"/>
<rect x="665.00" y="858.00" width="7.00" height="98.00" fill="#1f85be"/>
<rect x="665.00" y="948.00" width="7.00" height="8.00" fill="#1e9be1"/>
<rect x="674.00" y="858.00" width="7.00" height="98.00" fill="#1f85be"/>
<rect x="674.00" y="948.00" width="7.00" height="8.00" fill="#1e9be1"/>
<rect x="683.00" y="858.00" width="7.00" height="98.00" fill="#1f85be"/>
<rect x="683.00" y="947.00" width="7.00" height="9.00" fill="#1e9be1"/>
<rect x="692.00" y="858.00" width="7.00" height="98.00" fill="#1f85be"/>
<rect x="692.00" y="947.00" width="7.00" height="9.00" fill="#1e9be1"/>
<rect x="700.00" y="858.00" width="7.00" height="98.00" fill="#1f85be"/>
<rect x="700.00" y="947.00" width="7.00" height="9.00" fill="#1e9be1"/>
<rect x="709.00" y="858.00" width="7.00" height="98.00" fill="#1f85be"/>
<rect x="709.00" y="947.00" width="7.00" height="9.00" fill="#1e9be1"/>
<rect x="718.00" y="858.00" width="7.00" height="98.00" fill="#1f85be"/>
<rect x="718.00" y="947.00" width="7.00" height="9.00" fill="#1e9be1"/>
<rect x="727.00" y="858.00" width="7.00" height="98.00" fill="#1f85be"/>
<rect x="727.00" y="947.00" width="7.00" height="9.00" fill="#1e9be1"/>
<text x="734.0" y="844.6" font-size="11" fill="#222222" text-anchor="end" textLength="45.2" lengthAdjust="spacingAndGlyphs">4000 GB</text>
<text x="734.0" y="899.6" font-size="11" fill="#222222" text-anchor="end" textLength="45.2" lengthAdjust="spacingAndGlyphs">2000 GB</text>
<line x1="85.00" y1="956.50" x2="734.00" y2="956.50" stroke="#c0d0e0" stroke-width="1"/>
<line x1="88.50" y1="956.50" x2="88.50" y2="965.50" stroke="#c0d0e0" stroke-width="1"/>
<line x1="195.50" y1="956.50" x2="195.50" y2="965.50" stroke="#c0d0e0" stroke-width="1"/>
<line x1="302.50" y1="956.50" x2="302.50" y2="965.50" stroke="#c0d0e0" stroke-width="1"/>
<line x1="409.50" y1="956.50" x2="409.50" y2="965.50" stroke="#c0d0e0" stroke-width="1"/>
<line x1="515.50" y1="956.50" x2="515.50" y2="965.50" stroke="#c0d0e0" stroke-width="1"/>
<line x1="622.50" y1="956.50" x2="622.50" y2="965.50" stroke="#c0d0e0" stroke-width="1"/>
<line x1="729.50" y1="956.50" x2="729.50" y2="965.50" stroke="#c0d0e0" stroke-width="1"/>
<text x="85.9" y="976.2" font-size="11" fill="#666666" textLength="30.3" lengthAdjust="spacingAndGlyphs">12:00</text>
<text x="195.5" y="976.2" font-size="11" fill="#666666" text-anchor="middle" textLength="30.3" lengthAdjust="spacingAndGlyphs">00:00</text>
<text x="195.5" y="992.2" font-size="11" fill="#666666" text-anchor="middle" textLength="31.2" lengthAdjust="spacingAndGlyphs">10-21</text>
<text x="302.4" y="976.2" font-size="11" fill="#666666" text-anchor="middle" textLength="30.3" lengthAdjust="spacingAndGlyphs">12:00</text>
<text x="409.4" y="976.2" font-size="11" fill="#666666" text-anchor="middle" textLength="30.3" lengthAdjust="spacingAndGlyphs">00:00</text>
<text x="409.4" y="992.2" font-size="11" fill="#666666" text-anchor="middle" textLength="31.2" lengthAdjust="spacingAndGlyphs">10-22</text>
<text x="515.5" y="976.2" font-size="11" fill="#666666" text-anchor="middle" textLength="30.3" lengthAdjust="spacingAndGlyphs">12:00</text>
<text x="622.4" y="976.2" font-size="11" fill="#666666" text-anchor="middle" textLength="30.3" lengthAdjust="spacingAndGlyphs">00:00</text>
<text x="622.4" y="992.2" font-size="11" fill="#666666" text-anchor="middle" textLength="31.2" lengthAdjust="spacingAndGlyphs">10-23</text>
<text x="733.6" y="976.2" font-size="11" fill="#666666" text-anchor="end" textLength="30.3" lengthAdjust="spacingAndGlyphs">12:00</text>
<rect x="473.40" y="1012.50" width="245.80" height="39.50" fill="#d5e2f3"/>
<line x1="186.70" y1="1012.50" x2="186.70" y2="1052.00" stroke="#000" stroke-opacity="0.08" stroke-width="1"/>
<line x1="350.50" y1="1012.50" x2="350.50" y2="1052.00" stroke="#000" stroke-opacity="0.08" stroke-width="1"/>
<line x1="513.50" y1="1012.50" x2="513.50" y2="1052.00" stroke="#000" stroke-opacity="0.08" stroke-width="1"/>
<line x1="677.30" y1="1012.50" x2="677.30" y2="1052.00" stroke="#000" stroke-opacity="0.08" stroke-width="1"/>
<path d="M99.00,1048.30 L542.70,1048.30 L546.00,1031.20 L719.20,1015.20" fill="none" stroke="#4572a7" stroke-width="1.05"/>
<text x="190.5" y="1047.8" font-size="11" fill="#888888" textLength="32.7" lengthAdjust="spacingAndGlyphs">10-17</text>
<text x="354.3" y="1047.8" font-size="11" fill="#888888" textLength="32.7" lengthAdjust="spacingAndGlyphs">10-19</text>
<text x="518.6" y="1047.8" font-size="11" fill="#888888" textLength="30.5" lengthAdjust="spacingAndGlyphs">10-21</text>
<text x="681.9" y="1047.8" font-size="11" fill="#888888" textLength="31.5" lengthAdjust="spacingAndGlyphs">10-23</text>
<path d="M85.00,1012.50 H734.00 M473.40,1012.50 V1052.00 M719.20,1012.50 V1052.00" stroke="#b2b1b6" stroke-width="1" fill="none"/>
<rect x="85.00" y="1052.00" width="649.00" height="14.50" fill="#eeeeee"/>
<rect x="473.40" y="1052.00" width="245.80" height="14.50" fill="#bfc7d0"/>
<line x1="473.40" y1="1066.00" x2="719.20" y2="1066.00" stroke="#adb3ba" stroke-width="1"/>
<rect x="85.50" y="1052.50" width="13.30" height="13.50" fill="#e8e6e6" stroke="#b8b8b8" stroke-width="1"/>
<rect x="720.20" y="1052.50" width="13.30" height="13.50" fill="#e8e6e6" stroke="#b8b8b8" stroke-width="1"/>
<path d="M90.60,1059.25 L93.60,1056.25 V1062.25 Z" fill="#444"/>
<path d="M728.40,1059.25 L725.40,1056.25 V1062.25 Z" fill="#444"/>
<line x1="593.00" y1="1057.00" x2="593.00" y2="1062.20" stroke="#777" stroke-width="1.4"/>
<line x1="596.05" y1="1057.00" x2="596.05" y2="1062.20" stroke="#777" stroke-width="1.4"/>
<line x1="599.10" y1="1057.00" x2="599.10" y2="1062.20" stroke="#777" stroke-width="1.4"/>
<rect x="469.10" y="1024.60" width="7.10" height="14.30" fill="#f2f2f2" stroke="#999999" stroke-width="1"/>
<path d="M471.35,1027.10 V1035.90 M473.95,1027.10 V1035.90" stroke="#999" stroke-width="0.7"/>
<rect x="715.90" y="1024.60" width="7.20" height="14.30" fill="#f2f2f2" stroke="#999999" stroke-width="1"/>
<path d="M718.20,1027.10 V1035.90 M720.80,1027.10 V1035.90" stroke="#999" stroke-width="0.7"/>
<rect x="306.00" y="1083.30" width="16.00" height="11.50" fill="#1f85be"/>
<text x="327.7" y="1093.8" font-size="12" fill="#333333" font-weight="bold" textLength="54.5" lengthAdjust="spacingAndGlyphs">Available</text>
<rect x="401.20" y="1083.30" width="16.00" height="11.50" fill="#1e9be1"/>
<text x="422.8" y="1093.8" font-size="12" fill="#333333" font-weight="bold" textLength="36.9" lengthAdjust="spacingAndGlyphs">In Use</text>
<text x="1118.1" y="774.7" font-size="16" fill="#333333" text-anchor="middle" textLength="57.6" lengthAdjust="spacingAndGlyphs">Storage</text>
<clipPath id="rt4"><rect x="1423.5" y="765.85" width="16" height="7.35"/></clipPath>
<clipPath id="rb4"><rect x="1423.5" y="774.70" width="16" height="8"/></clipPath>
<path d="M1425.75,773.85 A5.75,5.75 0 1 1 1437.25,773.85 A5.75,5.75 0 1 1 1425.75,773.85 Z M1427.95,773.85 A3.55,3.55 0 1 0 1435.05,773.85 A3.55,3.55 0 1 0 1427.95,773.85 Z" fill="#111" fill-rule="evenodd" clip-path="url(#rt4)"/>
<path d="M1425.75,773.85 A5.75,5.75 0 1 1 1437.25,773.85 A5.75,5.75 0 1 1 1425.75,773.85 Z M1427.95,773.85 A3.55,3.55 0 1 0 1435.05,773.85 A3.55,3.55 0 1 0 1427.95,773.85 Z" fill="#111" fill-rule="evenodd" clip-path="url(#rb4)"/>
<path d="M1437.80,769.00 L1437.80,773.20 L1433.00,773.20 Z" fill="#111"/>
<path d="M1425.20,778.90 L1425.20,774.70 L1429.80,774.70 Z" fill="#111"/>
<line x1="1454.90" y1="768.50" x2="1468.90" y2="768.50" stroke="#5c5c5c" stroke-width="2.9" stroke-linecap="round"/>
<line x1="1454.90" y1="773.40" x2="1468.90" y2="773.40" stroke="#5c5c5c" stroke-width="2.9" stroke-linecap="round"/>
<line x1="1454.90" y1="778.50" x2="1468.90" y2="778.50" stroke="#5c5c5c" stroke-width="2.9" stroke-linecap="round"/>
<text x="831.4" y="816.8" font-size="11.5" fill="#555555" textLength="32.2" lengthAdjust="spacingAndGlyphs">Zoom</text>
<rect x="869.00" y="802.00" width="32.00" height="22.00" fill="#f6f6f6"/>
<text x="885.0" y="816.8" font-size="12" fill="#333333" text-anchor="middle" textLength="21.5" lengthAdjust="spacingAndGlyphs">12h</text>
<rect x="906.40" y="802.00" width="32.00" height="22.00" fill="#f6f6f6"/>
<text x="922.4" y="816.8" font-size="12" fill="#333333" text-anchor="middle" textLength="13.8" lengthAdjust="spacingAndGlyphs">1d</text>
<rect x="943.20" y="802.00" width="32.00" height="22.00" fill="#e5ebf5"/>
<text x="959.2" y="816.8" font-size="12" fill="#000000" font-weight="bold" text-anchor="middle" textLength="15.4" lengthAdjust="spacingAndGlyphs">3d</text>
<rect x="980.00" y="802.00" width="32.00" height="22.00" fill="#f6f6f6"/>
<text x="996.0" y="816.8" font-size="12" fill="#333333" text-anchor="middle" textLength="13.9" lengthAdjust="spacingAndGlyphs">5d</text>
<rect x="1016.90" y="802.00" width="32.00" height="22.00" fill="#f6f6f6"/>
<text x="1032.9" y="816.8" font-size="12" fill="#333333" text-anchor="middle" textLength="13.1" lengthAdjust="spacingAndGlyphs">all</text>
<text x="1214.6" y="816.8" font-size="11" fill="#555555" textLength="28.8" lengthAdjust="spacingAndGlyphs">From</text>
<rect x="1251.50" y="802.50" width="94.00" height="21.00" fill="#ffffff" stroke="#cccccc" stroke-width="1"/>
<text x="1298.5" y="816.8" font-size="11.3" fill="#333333" text-anchor="middle" textLength="73.8" lengthAdjust="spacingAndGlyphs">2015-10-20</text>
<text x="1357.5" y="816.8" font-size="11" fill="#555555" textLength="13.5" lengthAdjust="spacingAndGlyphs">To</text>
<rect x="1379.50" y="802.50" width="94.00" height="21.00" fill="#ffffff" stroke="#cccccc" stroke-width="1"/>
<text x="1426.5" y="816.8" font-size="11.3" fill="#333333" text-anchor="middle" textLength="73.8" lengthAdjust="spacingAndGlyphs">2015-10-23</text>
<line x1="830.50" y1="873.50" x2="1473.00" y2="873.50" stroke="#c0c0c0" stroke-width="1"/>
<line x1="830.50" y1="914.50" x2="1473.00" y2="914.50" stroke="#c0c0c0" stroke-width="1"/>
<line x1="830.50" y1="956.50" x2="1473.00" y2="956.50" stroke="#c0c0c0" stroke-width="1"/>
<text x="816.0" y="871.0" font-size="11" fill="#222222" text-anchor="end" textLength="46.8" lengthAdjust="spacingAndGlyphs">4000 MB</text>
<text x="816.0" y="912.1" font-size="11" fill="#222222" text-anchor="end" textLength="46.8" lengthAdjust="spacingAndGlyphs">2000 MB</text>
<text x="816.0" y="953.7" font-size="11" fill="#222222" text-anchor="end" textLength="27.5" lengthAdjust="spacingAndGlyphs">0 MB</text>
<rect x="1035.00" y="919.00" width="7.00" height="37.50" fill="#1e9be1"/>
<rect x="1043.00" y="882.00" width="7.00" height="74.50" fill="#1e9be1"/>
<rect x="1052.00" y="876.00" width="7.00" height="80.50" fill="#1e9be1"/>
<rect x="1061.00" y="873.00" width="7.00" height="83.50" fill="#1e9be1"/>
<rect x="1070.00" y="877.00" width="7.00" height="79.50" fill="#1e9be1"/>
<rect x="1079.00" y="880.00" width="7.00" height="76.50" fill="#1e9be1"/>
<rect x="1087.00" y="858.00" width="7.00" height="98.50" fill="#1e9be1"/>
<rect x="1096.00" y="858.00" width="7.00" height="98.50" fill="#1e9be1"/>
<rect x="1105.00" y="858.00" width="7.00" height="98.50" fill="#1e9be1"/>
<rect x="1114.00" y="866.00" width="7.00" height="90.50" fill="#1e9be1"/>
<rect x="1123.00" y="858.00" width="7.00" height="98.50" fill="#1e9be1"/>
<rect x="1131.00" y="860.00" width="7.00" height="96.50" fill="#1e9be1"/>
<rect x="1140.00" y="860.00" width="7.00" height="96.50" fill="#1e9be1"/>
<rect x="1149.00" y="861.00" width="7.00" height="95.50" fill="#1e9be1"/>
<rect x="1158.00" y="862.00" width="7.00" height="94.50" fill="#1e9be1"/>
<rect x="1167.00" y="865.00" width="7.00" height="91.50" fill="#1e9be1"/>
<rect x="1175.00" y="866.00" width="7.00" height="90.50" fill="#1e9be1"/>
<rect x="1184.00" y="866.00" width="7.00" height="90.50" fill="#1e9be1"/>
<rect x="1193.00" y="898.00" width="7.00" height="58.50" fill="#1e9be1"/>
<rect x="1202.00" y="897.00" width="7.00" height="59.50" fill="#1e9be1"/>
<rect x="1211.00" y="881.00" width="7.00" height="75.50" fill="#1e9be1"/>
<rect x="1219.00" y="878.00" width="7.00" height="78.50" fill="#1e9be1"/>
<rect x="1228.00" y="873.00" width="7.00" height="83.50" fill="#1e9be1"/>
<rect x="1237.00" y="869.00" width="7.00" height="87.50" fill="#1e9be1"/>
<rect x="1246.00" y="874.00" width="7.00" height="82.50" fill="#1e9be1"/>
<rect x="1255.00" y="871.00" width="7.00" height="85.50" fill="#1e9be1"/>
<rect x="1263.00" y="870.00" width="7.00" height="86.50" fill="#1e9be1"/>
<rect x="1272.00" y="874.00" width="7.00" height="82.50" fill="#1e9be1"/>
<rect x="1281.00" y="895.00" width="7.00" height="61.50" fill="#1e9be1"/>
<rect x="1290.00" y="898.00" width="7.00" height="58.50" fill="#1e9be1"/>
<rect x="1298.00" y="902.00" width="7.00" height="54.50" fill="#1e9be1"/>
<rect x="1307.00" y="903.00" width="7.00" height="53.50" fill="#1e9be1"/>
<rect x="1316.00" y="901.00" width="7.00" height="55.50" fill="#1e9be1"/>
<rect x="1325.00" y="901.00" width="7.00" height="55.50" fill="#1e9be1"/>
<rect x="1334.00" y="901.00" width="7.00" height="55.50" fill="#1e9be1"/>
<rect x="1342.00" y="901.00" width="7.00" height="55.50" fill="#1e9be1"/>
<rect x="1351.00" y="901.00" width="7.00" height="55.50" fill="#1e9be1"/>
<rect x="1360.00" y="901.00" width="7.00" height="55.50" fill="#1e9be1"/>
<rect x="1369.00" y="901.00" width="7.00" height="55.50" fill="#1e9be1"/>
<rect x="1378.00" y="901.00" width="7.00" height="55.50" fill="#1e9be1"/>
<rect x="1386.00" y="901.00" width="7.00" height="55.50" fill="#1e9be1"/>
<rect x="1395.00" y="901.00" width="7.00" height="55.50" fill="#1e9be1"/>
<rect x="1404.00" y="904.00" width="7.00" height="52.50" fill="#1e9be1"/>
<rect x="1413.00" y="903.00" width="7.00" height="53.50" fill="#1e9be1"/>
<rect x="1422.00" y="901.00" width="7.00" height="55.50" fill="#1e9be1"/>
<rect x="1430.00" y="903.00" width="7.00" height="53.50" fill="#1e9be1"/>
<rect x="1439.00" y="903.00" width="7.00" height="53.50" fill="#1e9be1"/>
<rect x="1448.00" y="905.00" width="7.00" height="51.50" fill="#1e9be1"/>
<rect x="1457.00" y="898.00" width="7.00" height="58.50" fill="#1e9be1"/>
<rect x="1466.00" y="916.00" width="7.00" height="40.50" fill="#1e9be1"/>
<text x="1473.0" y="871.0" font-size="11" fill="#222222" text-anchor="end" textLength="46.8" lengthAdjust="spacingAndGlyphs">4000 MB</text>
<text x="1473.0" y="912.1" font-size="11" fill="#222222" text-anchor="end" textLength="46.8" lengthAdjust="spacingAndGlyphs">2000 MB</text>
<text x="1473.0" y="953.7" font-size="11" fill="#222222" text-anchor="end" textLength="27.5" lengthAdjust="spacingAndGlyphs">0 MB</text>
<line x1="830.50" y1="997.50" x2="1473.00" y2="997.50" stroke="#c0d0e0" stroke-width="1"/>
<line x1="834.50" y1="997.50" x2="834.50" y2="1006.50" stroke="#c0d0e0" stroke-width="1"/>
<line x1="940.50" y1="997.50" x2="940.50" y2="1006.50" stroke="#c0d0e0" stroke-width="1"/>
<line x1="1045.50" y1="997.50" x2="1045.50" y2="1006.50" stroke="#c0d0e0" stroke-width="1"/>
<line x1="1151.50" y1="997.50" x2="1151.50" y2="1006.50" stroke="#c0d0e0" stroke-width="1"/>
<line x1="1257.50" y1="997.50" x2="1257.50" y2="1006.50" stroke="#c0d0e0" stroke-width="1"/>
<line x1="1362.50" y1="997.50" x2="1362.50" y2="1006.50" stroke="#c0d0e0" stroke-width="1"/>
<line x1="1468.50" y1="997.50" x2="1468.50" y2="1006.50" stroke="#c0d0e0" stroke-width="1"/>
<text x="831.8" y="1017.0" font-size="11" fill="#666666" textLength="30.3" lengthAdjust="spacingAndGlyphs">12:00</text>
<text x="940.0" y="1017.0" font-size="11" fill="#666666" text-anchor="middle" textLength="30.3" lengthAdjust="spacingAndGlyphs">00:00</text>
<text x="940.0" y="1033.2" font-size="11" fill="#666666" text-anchor="middle" textLength="31.2" lengthAdjust="spacingAndGlyphs">10-21</text>
<text x="1045.7" y="1017.0" font-size="11" fill="#666666" text-anchor="middle" textLength="30.3" lengthAdjust="spacingAndGlyphs">12:00</text>
<text x="1151.5" y="1017.0" font-size="11" fill="#666666" text-anchor="middle" textLength="30.3" lengthAdjust="spacingAndGlyphs">00:00</text>
<text x="1151.5" y="1033.2" font-size="11" fill="#666666" text-anchor="middle" textLength="31.2" lengthAdjust="spacingAndGlyphs">10-22</text>
<text x="1257.2" y="1017.0" font-size="11" fill="#666666" text-anchor="middle" textLength="30.3" lengthAdjust="spacingAndGlyphs">12:00</text>
<text x="1362.9" y="1017.0" font-size="11" fill="#666666" text-anchor="middle" textLength="30.3" lengthAdjust="spacingAndGlyphs">00:00</text>
<text x="1362.9" y="1033.2" font-size="11" fill="#666666" text-anchor="middle" textLength="31.2" lengthAdjust="spacingAndGlyphs">10-23</text>
<text x="1472.5" y="1017.0" font-size="11" fill="#666666" text-anchor="end" textLength="30.3" lengthAdjust="spacingAndGlyphs">12:00</text>
<rect x="1215.00" y="1043.50" width="243.30" height="39.80" fill="#d5e2f3"/>
<line x1="931.75" y1="1043.50" x2="931.75" y2="1083.30" stroke="#000" stroke-opacity="0.08" stroke-width="1"/>
<line x1="1093.50" y1="1043.50" x2="1093.50" y2="1083.30" stroke="#000" stroke-opacity="0.08" stroke-width="1"/>
<line x1="1255.75" y1="1043.50" x2="1255.75" y2="1083.30" stroke="#000" stroke-opacity="0.08" stroke-width="1"/>
<line x1="1417.50" y1="1043.50" x2="1417.50" y2="1083.30" stroke="#000" stroke-opacity="0.08" stroke-width="1"/>
<path d="M845.50,1079.30 L1290.80,1079.30 L1296.50,1054.00 L1299.00,1052.10 L1303.50,1051.20 L1310.50,1053.30 L1313.70,1046.40 L1320.60,1046.10 L1323.80,1049.10 L1327.60,1046.10 L1339.70,1047.40 L1350.50,1048.60 L1354.90,1059.70 L1357.50,1059.00 L1361.30,1053.30 L1370.80,1049.50 L1374.60,1051.70 L1381.60,1050.20 L1384.10,1051.20 L1388.60,1059.00 L1396.80,1061.30 L1401.90,1060.60 L1429.90,1060.30 L1435.60,1061.60 L1441.90,1060.30 L1453.40,1062.20 L1458.30,1062.40" fill="none" stroke="#4572a7" stroke-width="1.05"/>
<text x="935.5" y="1078.8" font-size="11" fill="#888888" textLength="32.7" lengthAdjust="spacingAndGlyphs">10-17</text>
<text x="1097.3" y="1078.8" font-size="11" fill="#888888" textLength="32.7" lengthAdjust="spacingAndGlyphs">10-19</text>
<text x="1259.5" y="1078.8" font-size="11" fill="#888888" textLength="30.5" lengthAdjust="spacingAndGlyphs">10-21</text>
<text x="1422.0" y="1078.8" font-size="11" fill="#888888" textLength="31.5" lengthAdjust="spacingAndGlyphs">10-23</text>
<path d="M830.50,1043.50 H1473.00 M1215.00,1043.50 V1083.30 M1458.30,1043.50 V1083.30" stroke="#b2b1b6" stroke-width="1" fill="none"/>
<rect x="830.50" y="1083.30" width="642.50" height="14.20" fill="#eeeeee"/>
<rect x="1215.00" y="1083.30" width="243.30" height="14.20" fill="#bfc7d0"/>
<line x1="1215.00" y1="1097.00" x2="1458.30" y2="1097.00" stroke="#adb3ba" stroke-width="1"/>
<rect x="831.00" y="1083.80" width="13.30" height="13.20" fill="#e8e6e6" stroke="#b8b8b8" stroke-width="1"/>
<rect x="1459.20" y="1083.80" width="13.30" height="13.20" fill="#e8e6e6" stroke="#b8b8b8" stroke-width="1"/>
<path d="M836.10,1090.40 L839.10,1087.40 V1093.40 Z" fill="#444"/>
<path d="M1467.40,1090.40 L1464.40,1087.40 V1093.40 Z" fill="#444"/>
<line x1="1334.05" y1="1087.50" x2="1334.05" y2="1093.00" stroke="#777" stroke-width="1.4"/>
<line x1="1336.75" y1="1087.50" x2="1336.75" y2="1093.00" stroke="#777" stroke-width="1.4"/>
<line x1="1339.45" y1="1087.50" x2="1339.45" y2="1093.00" stroke="#777" stroke-width="1.4"/>
<rect x="1211.25" y="1056.00" width="7.00" height="14.25" fill="#f2f2f2" stroke="#999999" stroke-width="1"/>
<path d="M1213.45,1058.50 V1067.25 M1216.05,1058.50 V1067.25" stroke="#999" stroke-width="0.7"/>
<rect x="1455.00" y="1056.00" width="7.00" height="14.25" fill="#f2f2f2" stroke="#999999" stroke-width="1"/>
<path d="M1457.20,1058.50 V1067.25 M1459.80,1058.50 V1067.25" stroke="#999" stroke-width="0.7"/>
</svg></body></html>
